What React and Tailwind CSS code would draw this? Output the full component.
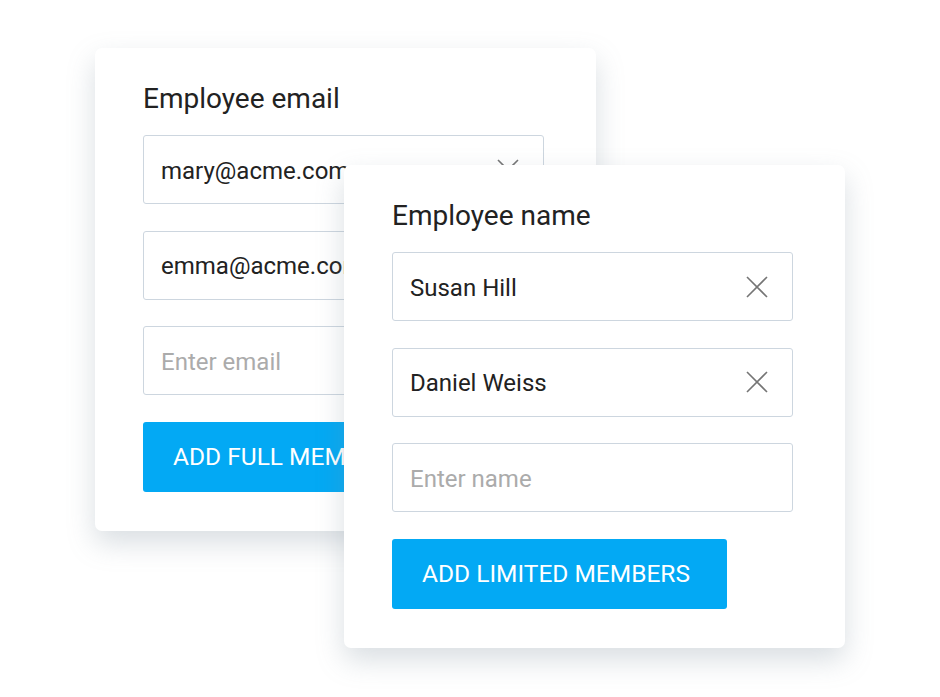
import React from "react";

function XIcon() {
  return (
    <svg width="22" height="22" viewBox="0 0 22 22" className="shrink-0">
      <path d="M1 1 L21 21 M21 1 L1 21" stroke="#757575" strokeWidth="1.6" strokeLinecap="butt" fill="none" />
    </svg>
  );
}

function Field({ value, placeholder, clear }) {
  return (
    <div className="flex h-[69px] w-[401px] items-center justify-between rounded-[3px] border border-[#cdd6df] bg-white pl-[17px] pr-[24px]">
      <span className={value ? "pt-[2px] text-[24px] text-[#222222]" : "pt-[2px] text-[24px] text-[#ababab]"}>
        {value || placeholder}
      </span>
      {clear && <XIcon />}
    </div>
  );
}

function Card({ label, fields, button, buttonW, className }) {
  return (
    <div className={"absolute flex h-[483px] w-[501px] flex-col rounded-[7px] bg-white pl-[48px] pt-[33px] shadow-[0_12px_28px_rgba(120,135,150,0.28)] " + className}>
      <div className="h-[36px] text-[28px] leading-[36px] text-[#222222]">{label}</div>
      <div className="mt-[18px] flex flex-col gap-[26.5px]">
        {fields.map((f, i) => (
          <Field key={i} {...f} />
        ))}
      </div>
      <button className={"mt-[26.5px] flex h-[70px] items-center rounded-[3px] bg-[#03a9f4] pl-[30px] pt-[1px] text-left text-[24.5px] text-white " + buttonW}>
        <span className="whitespace-nowrap">{button}</span>
      </button>
    </div>
  );
}

export default function App() {
  return (
    <div className="relative h-[697px] w-[940px] overflow-hidden bg-white" style={{ fontFamily: "Roboto, 'Liberation Sans', sans-serif" }}>
      <Card
        className="left-[95px] top-[48px]"
        label="Employee email"
        fields={[
          { value: "mary@acme.com", clear: true },
          { value: "emma@acme.com", clear: true },
          { placeholder: "Enter email" },
        ]}
        button="ADD FULL MEMBERS"
        buttonW="w-[290px] overflow-hidden"
      />
      <Card
        className="left-[344px] top-[165px]"
        label="Employee name"
        fields={[
          { value: "Susan Hill", clear: true },
          { value: "Daniel Weiss", clear: true },
          { placeholder: "Enter name" },
        ]}
        button="ADD LIMITED MEMBERS"
        buttonW="w-[335px]"
      />
    </div>
  );
}
